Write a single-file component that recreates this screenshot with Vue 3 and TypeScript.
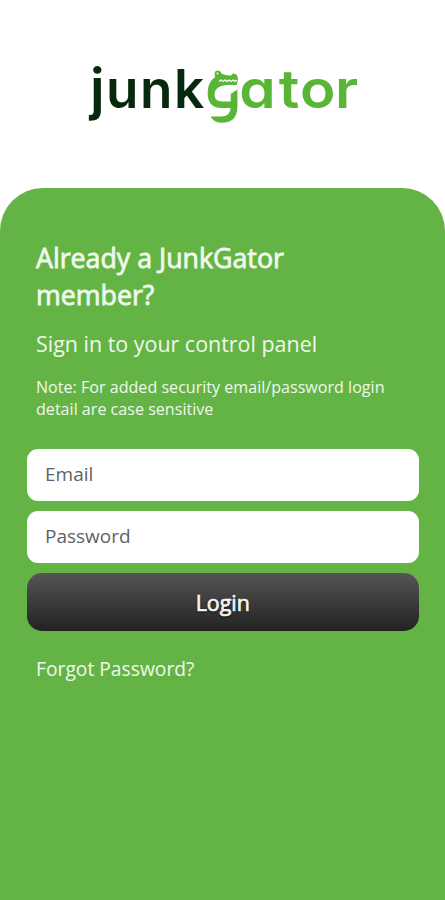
<script setup lang="ts">
import { ref } from 'vue'

const email = ref('')
const password = ref('')
</script>

<template>
  <main class="page">
    <header class="brand">
      <svg class="logo" width="300" height="112" viewBox="74 38 300 112" role="img" aria-label="junkgator">
        <text class="word dark" y="109 108 108 108" x="90 106 140 174"><tspan class="initial">j</tspan>unk</text>
        <g class="gator">
          <path d="M207.700 94 Q207.500 86 211 81 Q212.500 78.500 215 77.500 Q213.500 70.500 217.500 70.500 Q220.500 70.500 221.500 73.500 Q226 76 231 75.500 Q233 72.500 235.500 74 Q238 75.500 238 80 L236.500 85 H226 Q214.800 86 214.500 94.500 Q214.700 101.500 222 101.500 H231 V108 H222 Q208 108 207.700 94Z" />
          <path d="M230.700 94 L237.400 89.500 V107 Q237 122.800 222 122.800 Q214 122.800 210.500 116.500 H221 Q230.700 116.500 230.700 107Z" />
          <path class="teeth" d="M219 81.500 l2 -1.500 2 1.500 2 -1.500 2 1.500 2 -1.500 2 1.500 2 -1.500 2 1.500 2 -1.500" />
          <circle class="eye" cx="217.500" cy="73.500" r="0.900" />
        </g>
        <text class="word green" transform="scale(1.1 1)" y="108" x="217.500 253.500 272.700 304.500">ator</text>
      </svg>
    </header>

    <section class="panel">
      <div class="intro">
        <h1>Already a JunkGator member?</h1>
        <h2>Sign in to your control panel</h2>
        <p>Note: For added security email/password login detail are case sensitive</p>
      </div>
      <form class="form" @submit.prevent>
        <input v-model="email" type="email" placeholder="Email" aria-label="Email" />
        <input v-model="password" type="password" placeholder="Password" aria-label="Password" />
        <button type="submit">Login</button>
      </form>
      <a class="forgot" href="#">Forgot Password?</a>
    </section>
  </main>
</template>

<style>
body {
  margin: 0;
  background: #fff;
}
</style>

<style scoped>
.page {
  display: flex;
  flex-direction: column;
  min-height: 900px;
  background: #fff;
  font-family: 'Open Sans', sans-serif;
}

.brand {
  height: 188px;
  box-sizing: border-box;
  padding: 38px 0 0 74px;
}

.logo {
  display: block;
  overflow: visible;
}

.word {
  font-family: Inter, sans-serif;
  font-size: 53px;
  font-weight: 600;
  font-feature-settings: 'cv11';
}

.initial {
  font-size: 56px;
}

.dark {
  fill: #06280d;
}

.green,
.gator {
  fill: #58b536;
}

.teeth {
  fill: none;
  stroke: #fff;
  stroke-width: 1.2;
}

.eye {
  fill: #fff;
}

.panel {
  flex: 1;
  box-sizing: border-box;
  padding: 51px 26.500px 0 27px;
  border-radius: 43px 43px 0 0;
  background: #64b445;
}

.intro {
  padding: 0 9px;
  color: #eff8ec;
}

h1 {
  width: 300px;
  margin: 0;
  font-size: 26.750px;
  font-weight: 400;
  line-height: 37px;
  -webkit-text-stroke: 0.8px currentColor;
}

h2 {
  margin: 15px 0 0;
  font-size: 21.450px;
  font-weight: 400;
  line-height: 32px;
}

p {
  margin: 16px 0 0;
  font-size: 16.100px;
  line-height: 22px;
}

.form {
  display: flex;
  flex-direction: column;
  gap: 10px;
  margin-top: 29px;
}

input {
  box-sizing: border-box;
  width: 100%;
  height: 52px;
  padding: 0 18px 2px;
  border: 0;
  border-radius: 11px;
  background: #fff;
  font: 19px 'Open Sans', sans-serif;
}

input::placeholder {
  color: #606266;
  opacity: 1;
}

button {
  height: 58px;
  padding: 0;
  border: 0;
  border-radius: 15px;
  background: linear-gradient(#555, #222);
  color: #f5f5f5;
  font: 21.400px 'Open Sans', sans-serif;
  -webkit-text-stroke: 0.7px currentColor;
  text-shadow: 0 1px 2px #000;
}

.forgot {
  display: block;
  margin: 24px 9px 0;
  color: #eff8ec;
  font-size: 19.250px;
  line-height: 28px;
  text-decoration: none;
}
</style>
